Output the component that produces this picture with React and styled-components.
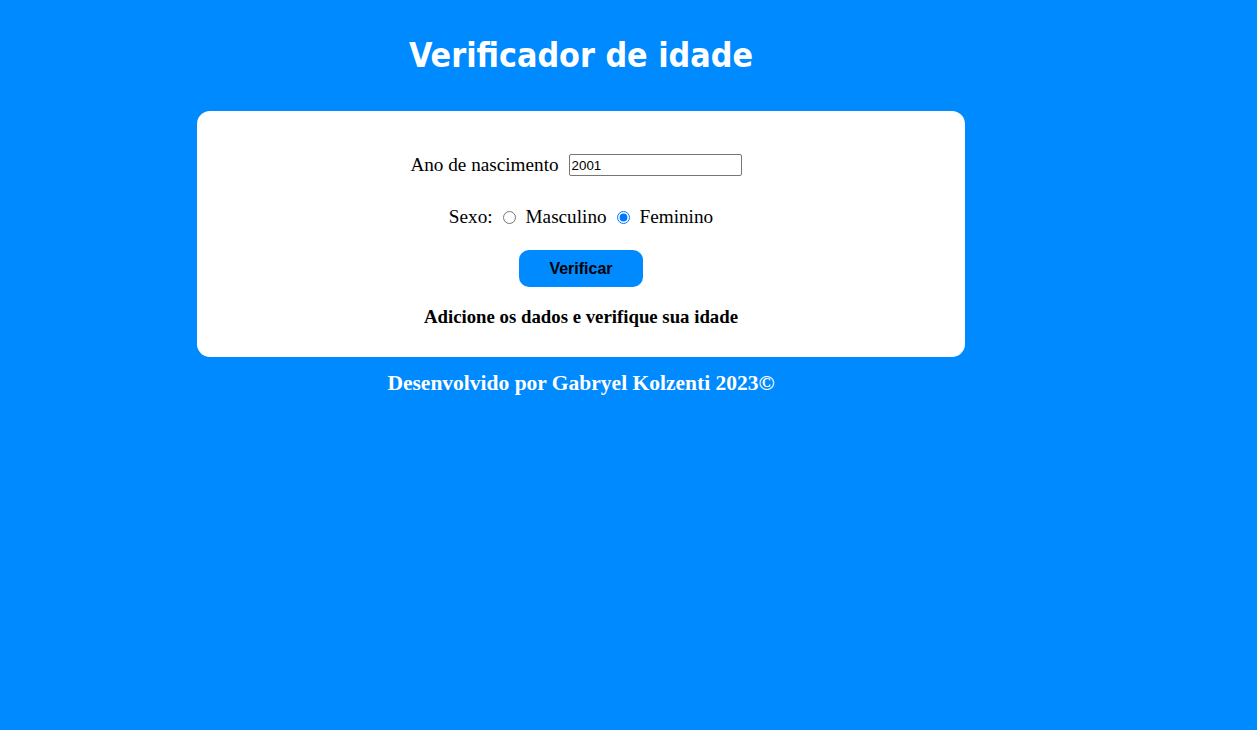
import React from 'react';
import styled, { createGlobalStyle } from 'styled-components';

const GlobalStyle = createGlobalStyle`
  body {
    margin: 0;
    background: #008aff;
    font-family: "Liberation Serif", "Times New Roman", serif;
    font-size: 16px;
  }
`;

const Page = styled.div`
  width: 768px;
  margin-left: 197px;
  padding-top: 1px;
`;

const Title = styled.h1`
  margin: 35px 0 35px;
  text-align: center;
  color: #fff;
  font-family: "DejaVu Sans Condensed", "DejaVu Sans", Verdana, sans-serif;
  font-size: 33.7px;
  font-weight: bold;
  line-height: 40px;
`;

const Card = styled.section`
  background: #fff;
  border-radius: 13px;
  height: 246px;
  box-sizing: border-box;
  padding-top: 43px;
  display: flex;
  flex-direction: column;
  align-items: center;
  font-size: 19.2px;
`;

const Row = styled.div`
  display: flex;
  align-items: center;
  gap: 4px;
  height: 22px;
  margin-bottom: ${(p) => p.$gap || 0}px;
  margin-right: ${(p) => p.$shift || 0}px;
`;

const YearInput = styled.input`
  width: 173px;
  height: 22px;
  box-sizing: border-box;
  margin-left: 6px;
  padding: 1px 2px;
  border: 1px solid #767676;
  border-radius: 2px;
  font-family: "Liberation Sans", Arial, sans-serif;
  font-size: 13.33px;
`;

const Radio = styled.input`
  width: 13px;
  height: 13px;
  margin: 0 6px;
  accent-color: #0075ff;
`;

const Button = styled.button`
  width: 124px;
  height: 37px;
  border: none;
  border-radius: 10px;
  background: #008aff;
  color: #000;
  font-family: "Liberation Sans", Arial, sans-serif;
  font-size: 16px;
  font-weight: bold;
  cursor: pointer;
`;

const Result = styled.p`
  margin: 19px 0 0;
  font-weight: bold;
  font-size: 18.8px;
`;

const Footer = styled.footer`
  margin-top: 14px;
  text-align: center;
  color: #fff;
  font-weight: bold;
  font-size: 21.5px;
`;

export default function App() {
  return (
    <>
      <GlobalStyle />
      <Page>
        <Title>Verificador de idade</Title>
        <Card>
          <Row $gap={30} $shift={10}>
            <label htmlFor="ano">Ano de nascimento</label>
            <YearInput id="ano" type="number" defaultValue="2001" />
          </Row>
          <Row $gap={22}>
            <span>Sexo:</span>
            <Radio type="radio" name="sexo" id="masc" />
            <label htmlFor="masc">Masculino</label>
            <Radio type="radio" name="sexo" id="fem" defaultChecked />
            <label htmlFor="fem">Feminino</label>
          </Row>
          <Button>Verificar</Button>
          <Result>Adicione os dados e verifique sua idade</Result>
        </Card>
        <Footer>Desenvolvido por Gabryel Kolzenti 2023©</Footer>
      </Page>
    </>
  );
}
